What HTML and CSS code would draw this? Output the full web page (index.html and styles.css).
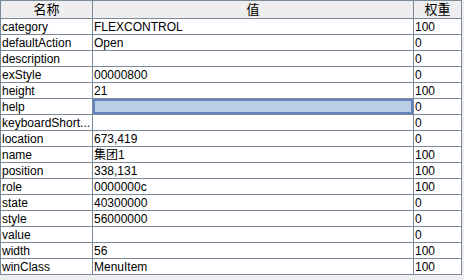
FILE: index.html
```html
<!DOCTYPE html>
<html>
<head>
<meta charset="utf-8">
<link rel="stylesheet" href="styles.css">
</head>
<body>
<div class="table">
  <div class="th">名称</div><div class="th">值</div><div class="th">权重</div>
  <div class="td">category</div><div class="td">FLEXCONTROL</div><div class="td">100</div>
  <div class="td">defaultAction</div><div class="td">Open</div><div class="td">0</div>
  <div class="td">description</div><div class="td"></div><div class="td">0</div>
  <div class="td">exStyle</div><div class="td">00000800</div><div class="td">0</div>
  <div class="td">height</div><div class="td">21</div><div class="td">100</div>
  <div class="td">help</div><div class="td sel"></div><div class="td">0</div>
  <div class="td">keyboardShort...</div><div class="td"></div><div class="td">0</div>
  <div class="td">location</div><div class="td">673,419</div><div class="td">0</div>
  <div class="td">name</div><div class="td">集团1</div><div class="td">100</div>
  <div class="td">position</div><div class="td">338,131</div><div class="td">100</div>
  <div class="td">role</div><div class="td">0000000c</div><div class="td">100</div>
  <div class="td">state</div><div class="td">40300000</div><div class="td">0</div>
  <div class="td">style</div><div class="td">56000000</div><div class="td">0</div>
  <div class="td">value</div><div class="td"></div><div class="td">0</div>
  <div class="td">width</div><div class="td">56</div><div class="td">100</div>
  <div class="td">winClass</div><div class="td">MenuItem</div><div class="td">100</div>
</div>
</body>
</html>
```
FILE: styles.css
```css
html, body {
  margin: 0;
  padding: 0;
  background: #eeeeee;
  width: 464px;
  height: 280px;
  overflow: hidden;
}
.table {
  display: grid;
  grid-template-columns: 91px 320px 47px;
  grid-template-rows: 17px;
  grid-auto-rows: 15px;
  gap: 1px;
  padding: 1px;
  width: 460px;
  background: #7a8a99;
  font-family: "Liberation Sans", "Noto Sans CJK SC", sans-serif;
  font-size: 12px;
  color: #000;
}
.th {
  background: #eeeeee;
  text-align: center;
  padding-top: 1px;
  line-height: 16px;
  font-size: 13px;
  white-space: nowrap;
  overflow: hidden;
}
.td {
  background: #ffffff;
  padding-top: 2px;
  line-height: 13px;
  padding-left: 1px;
  white-space: nowrap;
  overflow: hidden;
}
.sel {
  background: #b8cfe5;
  box-shadow: inset 0 0 0 2px #6382bf;
}
```
